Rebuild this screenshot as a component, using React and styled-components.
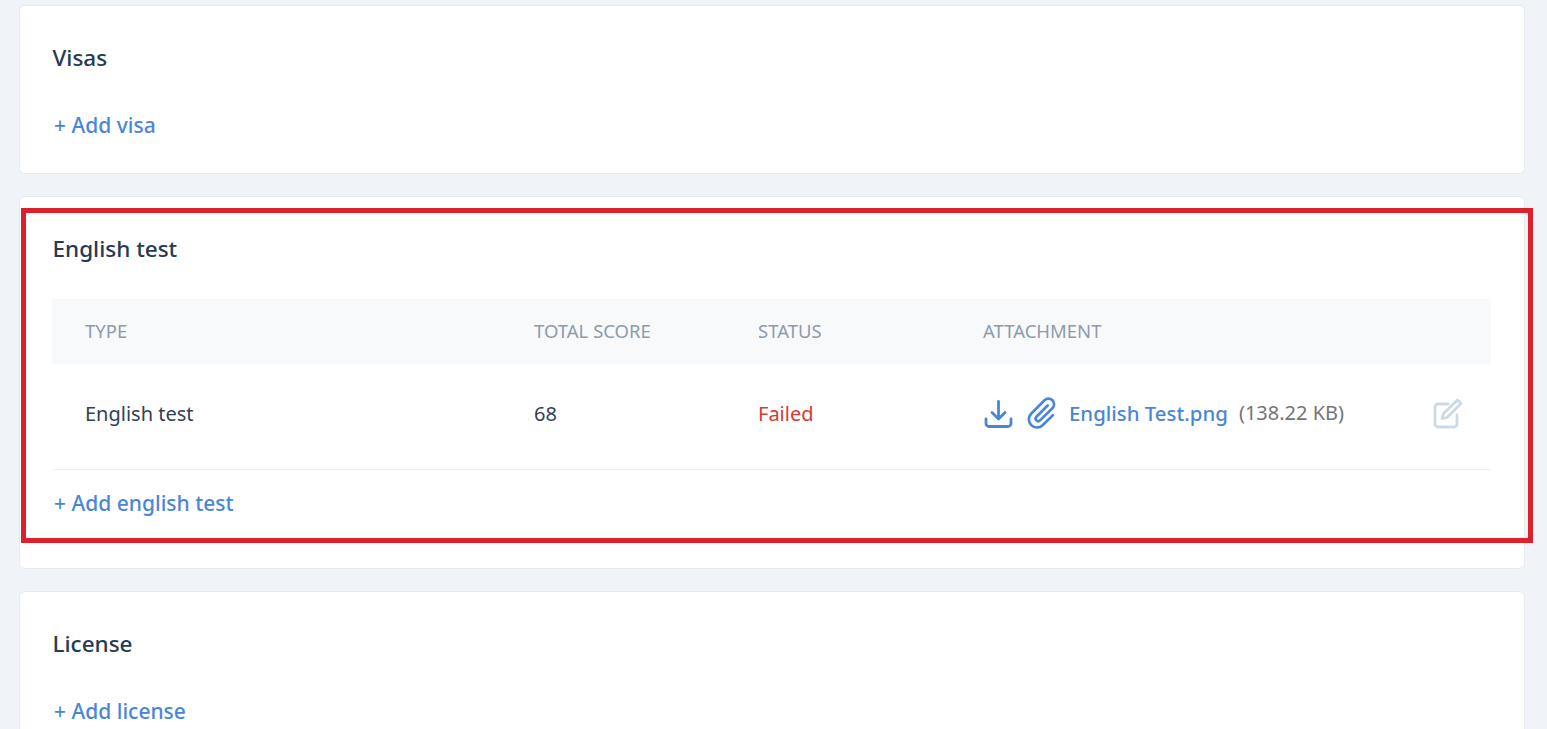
import React from 'react'
import styled, { createGlobalStyle } from 'styled-components'

const GlobalStyle = createGlobalStyle`
  html, body {
    margin: 0;
    padding: 0;
    height: 100%;
    overflow: hidden;
    background: #f0f4f8;
    font-family: "Noto Sans", "Open Sans", sans-serif;
  }
`

const Page = styled.div`
  position: relative;
  height: 729px;
  overflow: hidden;
  padding: 5px 22px 0 19px;
  display: flex;
  flex-direction: column;
  gap: 22px;
`

const Card = styled.section`
  background: #fff;
  border: 1px solid #e6ebf1;
  border-radius: 6px;
  padding: 35px 33px ${p => p.$bottom || 32}px 32px;
  flex-shrink: 0;
`

const Title = styled.h2`
  margin: 0 0 0 0.5px;
  font-size: 22.5px;
  line-height: 34px;
  font-weight: 500;
  color: #243b53;
`

const AddLink = styled.a`
  display: block;
  margin: ${p => p.$top}px 0 0 2px;
  font-size: 21px;
  line-height: 32px;
  font-weight: 500;
  color: #4a86d8;
`

const Row = styled.div`
  display: grid;
  grid-template-columns: 449px 224px 225px 1fr;
  padding: 0 28px 0 33px;
  align-items: center;
`

const HeadRow = styled(Row)`
  margin-top: 33px;
  height: 63px;
  padding-bottom: 2px;
  background: #f7f9fa;
  font-size: 18.5px;
  color: #8f9bab;
`

const BodyRow = styled(Row)`
  height: 99px;
  padding-bottom: 6px;
  border-bottom: 1px solid #e9edf1;
  font-size: 20px;
  color: #334155;
`

const Failed = styled.span`
  color: #d9392e;
`

const Attachment = styled.div`
  display: flex;
  align-items: center;
`

const DownloadIcon = styled.svg`
  flex-shrink: 0;
  margin: 1px 14px 0 1px;
  color: #4a86d8;
`

const ClipIcon = styled.svg`
  flex-shrink: 0;
  margin: 0 13px 2px 0;
  color: #4a86d8;
`

const FileName = styled.span`
  margin-bottom: 2px;
  font-size: 20.4px;
  font-weight: 500;
  color: #4a86d8;
`

const FileSize = styled.span`
  margin: 0 0 2px 11px;
  color: #757575;
`

const EditIcon = styled.svg`
  margin: 0 0 2px auto;
  color: #cdd9e3;
`

const Highlight = styled.div`
  position: absolute;
  left: 21px;
  top: 208px;
  width: 1512px;
  height: 335px;
  box-sizing: border-box;
  border: 5px solid #dc202c;
  pointer-events: none;
`

export default function App() {
  return (
    <>
      <GlobalStyle />
      <Page>
        <Card>
          <Title>Visas</Title>
          <AddLink $top={34}>+ Add visa</AddLink>
        </Card>
        <Card $bottom={49}>
          <Title>English test</Title>
          <HeadRow>
            <span>TYPE</span>
            <span>TOTAL SCORE</span>
            <span>STATUS</span>
            <span>ATTACHMENT</span>
          </HeadRow>
          <BodyRow>
            <span>English test</span>
            <span>68</span>
            <Failed>Failed</Failed>
            <Attachment>
              <DownloadIcon width="29" height="30" viewBox="0 0 29 30" fill="none" stroke="currentColor" strokeWidth="2.8" strokeLinecap="round" strokeLinejoin="round">
                <path d="M14.500 2.500v17M8 13.500l6.500 6.500 6.500-6.500" />
                <path d="M2 20v4.500a3 3 0 0 0 3 3h19a3 3 0 0 0 3-3V20" />
              </DownloadIcon>
              <ClipIcon width="29" height="32" viewBox="2 0.5 26.5 30" fill="none" stroke="currentColor" strokeWidth="2.5" strokeLinecap="round" strokeLinejoin="round">
                <path d="M21 8.500 10.500 19a2.400 2.400 0 0 0 3.400 3.400L25.500 11a5.230 5.230 0 0 0-7.400-7.400L5.500 16.200A7.640 7.640 0 0 0 16.300 27L26 17.500" />
              </ClipIcon>
              <FileName>English Test.png</FileName>
              <FileSize>(138.22 KB)</FileSize>
              <EditIcon width="32" height="32" viewBox="0 0 32 32" fill="none" stroke="currentColor" strokeWidth="2.8" strokeLinecap="round" strokeLinejoin="round">
                <path d="M26 18v9a3 3 0 0 1-3 3H7a3 3 0 0 1-3-3V10a3 3 0 0 1 3-3h10" />
                <path d="M26.500 3l3.500 3.500-14 14-5 1 1.500-5z" />
              </EditIcon>
            </Attachment>
          </BodyRow>
          <AddLink $top={17}>+ Add english test</AddLink>
        </Card>
        <Card>
          <Title>License</Title>
          <AddLink $top={34}>+ Add license</AddLink>
        </Card>
        <Highlight />
      </Page>
    </>
  )
}
